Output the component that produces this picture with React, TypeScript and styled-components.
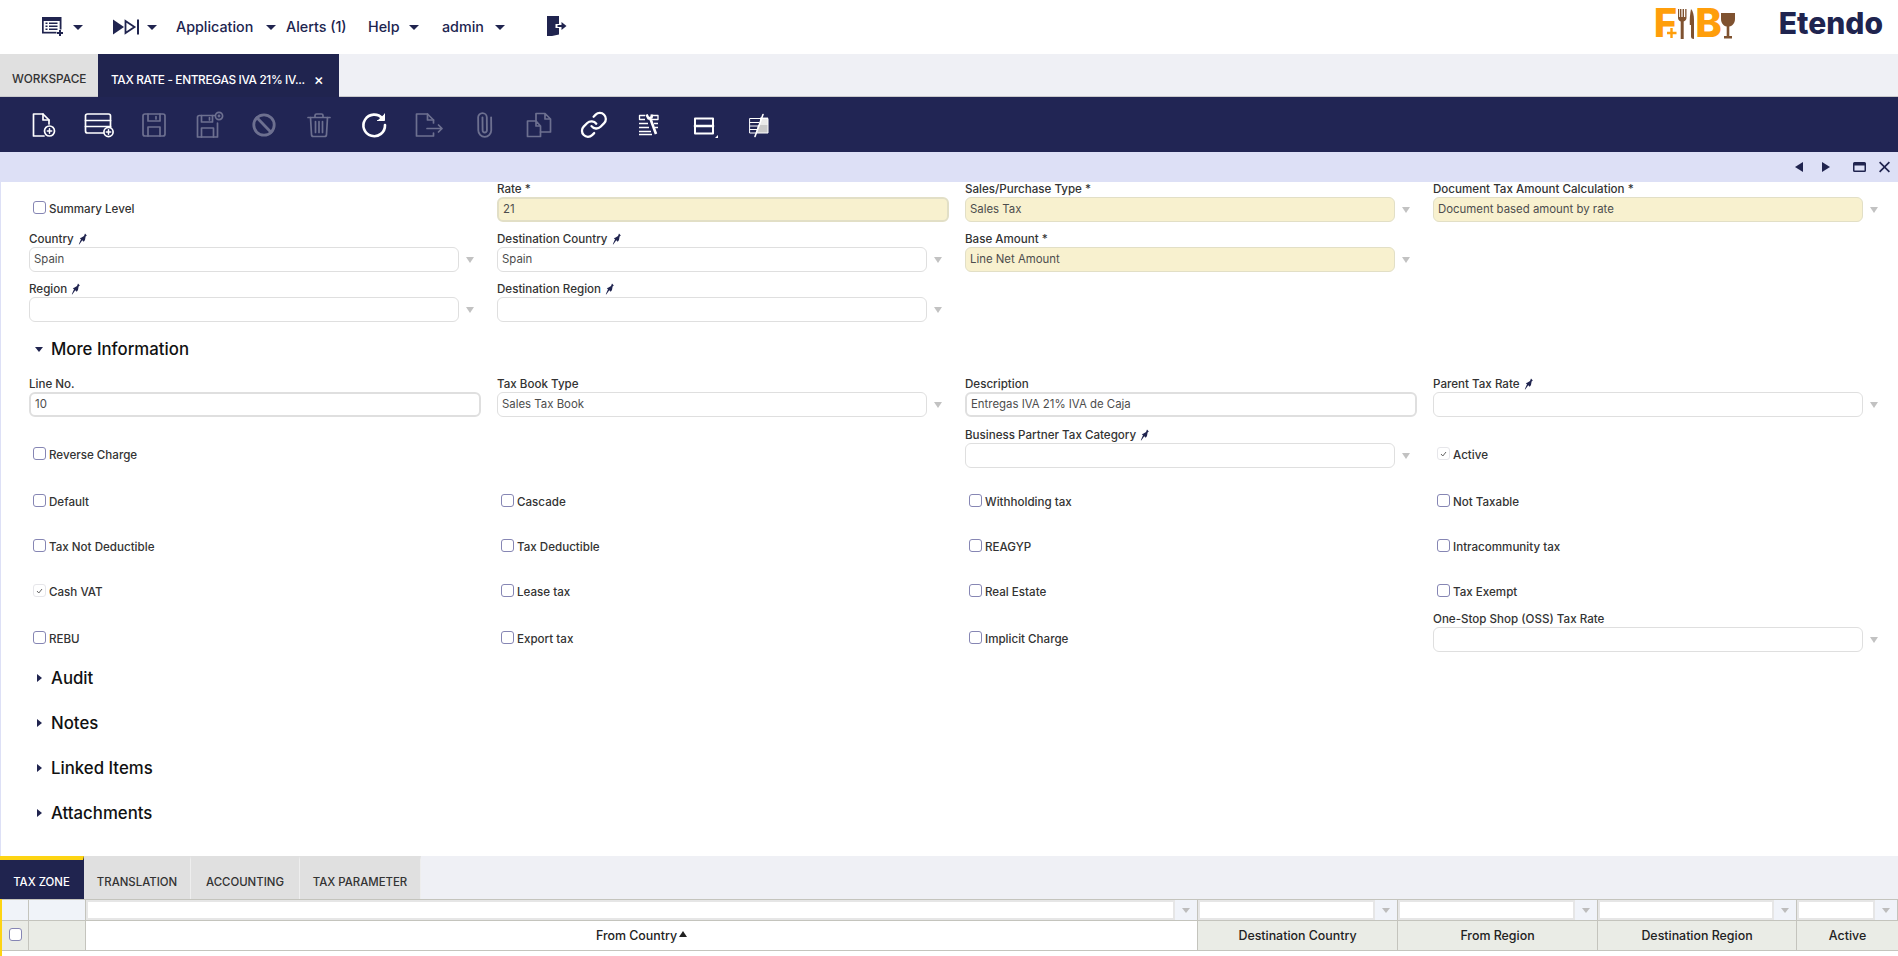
import React from "react";
import styled, { createGlobalStyle } from "styled-components";

const navy = "#20244f";

const GlobalStyle = createGlobalStyle`
  html, body {
    margin: 0;
    padding: 0;
    background: #fff;
    font-family: Inter, "Open Sans", sans-serif;
    overflow: hidden;
  }
  * { box-sizing: border-box; }
`;

const Page = styled.div`
  width: 1898px;
  height: 956px;
  display: flex;
  flex-direction: column;
  overflow: hidden;
`;

/* top bar */
const TopBar = styled.header`
  height: 54px;
  flex: none;
  display: flex;
  align-items: center;
  padding-left: 42px;
  background: #fff;
  color: ${navy};
`;

const NavItem = styled.div<{ $width: number; $gap?: number }>`
  width: ${(p) => p.$width}px;
  flex: none;
  display: flex;
  align-items: center;
  gap: ${(p) => p.$gap ?? 10}px;
  font-size: 14.3px;
  font-weight: 500;
  height: 54px;
`;

const NavText = styled.span`
  margin-top: -2px;
`;

const Caret = styled.span`
  width: 0;
  height: 0;
  border-left: 5px solid transparent;
  border-right: 5px solid transparent;
  border-top: 5px solid ${navy};
  flex: none;
`;

const LogoutIcon = styled.svg`
  margin-top: -2px;
`;

const LogoBox = styled.div`
  margin-left: auto;
  margin-right: 15px;
  display: flex;
  align-items: center;
`;

const FoodLogo = styled.div`
  display: flex;
  align-items: center;
  width: 122px;
  margin-bottom: 8px;
`;

const LogoLetter = styled.span<{ $ml?: number }>`
  flex: none;
  margin-left: ${(p) => p.$ml ?? 0}px;
  color: #ff9e0b;
  font-size: 40px;
  font-weight: 800;
  line-height: 52px;
`;

const LogoSvg = styled.svg<{ $ml?: number; $mt?: number }>`
  flex: none;
  margin-left: ${(p) => p.$ml ?? 0}px;
  margin-top: ${(p) => p.$mt ?? 0}px;
`;

const Brand = styled.div`
  font-size: 30px;
  font-weight: 800;
  color: ${navy};
  line-height: 38px;
  margin-bottom: 9px;
`;

/* window tabs */
const TabBar = styled.div`
  height: 43px;
  flex: none;
  display: flex;
  background: #eff0f5;
  border-bottom: 1px solid #c9c9cc;
`;

const WindowTab = styled.div<{ $active?: boolean }>`
  width: ${(p) => (p.$active ? 241 : 98)}px;
  margin-bottom: ${(p) => (p.$active ? -1 : 0)}px;
  padding: 8px 0 0 ${(p) => (p.$active ? 13 : 12)}px;
  display: flex;
  align-items: center;
  background: ${(p) => (p.$active ? navy : "#e0e0e0")};
  color: ${(p) => (p.$active ? "#fff" : "#333")};
  font-size: 11.8px;
  font-weight: 500;
  letter-spacing: ${(p) => (p.$active ? -0.33 : 0)}px;
  white-space: nowrap;
`;

const TabClose = styled.span`
  margin-left: 9px;
  font-size: 15px;
  color: #fff;
`;

/* toolbar */
const Toolbar = styled.div`
  height: 55px;
  flex: none;
  display: flex;
  padding-left: 16px;
  background: #212554;
`;

const ToolButton = styled.div<{ $off?: boolean }>`
  width: 55px;
  height: 55px;
  flex: none;
  display: flex;
  align-items: center;
  justify-content: center;
  color: ${(p) => (p.$off ? "#6d7090" : "#fff")};
`;

const ToolSvg = styled.svg.attrs({ viewBox: "0 0 32 28", width: 32, height: 28 })<{ $sw?: number }>`
  fill: none;
  stroke: currentColor;
  stroke-width: ${(p) => p.$sw ?? 1.7};
  stroke-linejoin: round;
  stroke-linecap: round;
`;

const StatusBar = styled.div`
  height: 30px;
  flex: none;
  display: flex;
  align-items: center;
  justify-content: flex-end;
  padding-right: 8px;
  background: #dde0f6;
  color: ${navy};
`;

const StatusIcon = styled.svg<{ $w: number; $mr?: number }>`
  width: ${(p) => p.$w}px;
  height: 14px;
  margin-right: ${(p) => p.$mr ?? 0}px;
  flex: none;
  fill: currentColor;
`;

/* form */
const FormArea = styled.main`
  flex: 1;
  min-height: 0;
  border-left: 1px solid #dde0f6;
  padding-left: 28px;
  background: #fff;
  overflow: hidden;
`;

const FormGrid = styled.div<{ $rows: string }>`
  display: grid;
  grid-template-columns: repeat(4, 468px);
  grid-template-rows: ${(p) => p.$rows};
  align-items: end;
`;

const FieldBox = styled.div`
  display: flex;
  flex-direction: column;
`;

const Label = styled.label`
  height: 16px;
  display: flex;
  align-items: center;
  gap: 4px;
  font-size: 11.6px;
  font-weight: 500;
  line-height: 16px;
  color: #333;
  white-space: nowrap;
`;

const InputRow = styled.div`
  display: flex;
  align-items: center;
`;

const TextBox = styled.div<{ $required?: boolean; $thick?: boolean; $wide?: boolean }>`
  width: ${(p) => (p.$wide ? 452 : 430)}px;
  height: 25px;
  padding: 0 4px 1px;
  display: flex;
  align-items: center;
  border: ${(p) => (p.$thick ? 2 : 1)}px solid ${(p) => (p.$required ? "#e2dfc6" : "#dfdfdf")};
  border-radius: 6px;
  background: ${(p) => (p.$required ? "#f8f1cf" : "#fff")};
  font-size: 11.4px;
  color: #4d4d4d;
  white-space: nowrap;
`;

const SelectArrow = styled.span`
  width: 22px;
  flex: none;
  display: flex;
  justify-content: center;
  &::before {
    content: "";
    border-left: 4.5px solid transparent;
    border-right: 4.5px solid transparent;
    border-top: 6px solid #c2c2c2;
  }
`;

const CheckCell = styled.div`
  height: 26px;
  padding-left: 4px;
  display: flex;
  align-items: center;
  gap: 3px;
  font-size: 11.6px;
  font-weight: 500;
  color: #333;
  white-space: nowrap;
`;

const Box = styled.span<{ $checked?: boolean }>`
  width: 13px;
  height: 13px;
  flex: none;
  margin-top: -3px;
  display: flex;
  align-items: center;
  justify-content: center;
  border: 1px solid ${(p) => (p.$checked ? "#e6e6ea" : "#8686b4")};
  border-radius: 3px;
  background: #fff;
`;

const SectionHead = styled.div<{ $h: number; $top?: number }>`
  height: ${(p) => p.$h}px;
  padding-top: ${(p) => p.$top ?? 0}px;
  display: flex;
  align-items: center;
  font-size: 16.8px;
  font-weight: 500;
  color: #111;
`;

const SectionArrow = styled.span<{ $open?: boolean }>`
  width: 22px;
  flex: none;
  display: flex;
  padding-left: ${(p) => (p.$open ? 6 : 8)}px;
  &::before {
    content: "";
    border: 0 solid transparent;
    ${(p) =>
      p.$open
        ? `border-width: 5px 4.5px 0; border-top-color: ${navy};`
        : `border-width: 4.5px 0 4.5px 5px; border-left-color: ${navy};`}
  }
`;

/* sub tabs + grid */
const SubTabs = styled.div`
  height: 43px;
  flex: none;
  display: flex;
  background: #eff0f5;
`;

const SubTab = styled.div<{ $active?: boolean; $width: number }>`
  width: ${(p) => p.$width}px;
  display: flex;
  align-items: center;
  justify-content: center;
  padding-top: 4px;
  background: ${(p) => (p.$active ? navy : "#e0e0e0")};
  border-top: 4px solid ${(p) => (p.$active ? "#fdd413" : "#e0e0e0")};
  border-right: 1px solid ${(p) => (p.$active ? navy : "#eeeeee")};
  color: ${(p) => (p.$active ? "#fff" : "#333")};
  font-size: 11.4px;
  font-weight: 500;
`;

const TableWrap = styled.div`
  flex: none;
  height: 57px;
  border-left: 2px solid #fdd413;
  background: #fff;
`;

const columns = "27px 57px 1112px 200px 200px 199px 101px";

const FilterRow = styled.div`
  height: 22px;
  display: grid;
  grid-template-columns: ${columns};
  border-top: 1px solid #c4c4bd;
  border-bottom: 1px solid #c4c4bd;
`;

const FilterCell = styled.div`
  display: flex;
  background: #f0f3f9;
  border-right: 1px solid #c4c4bd;
`;

const FilterInput = styled.div`
  flex: 1;
  background: #fff;
  border: 2px solid #e6e6e6;
`;

const FilterArrow = styled.span`
  width: 22px;
  flex: none;
  display: flex;
  align-items: center;
  justify-content: center;
  &::before {
    content: "";
    border-left: 4px solid transparent;
    border-right: 4px solid transparent;
    border-top: 5px solid #bdbdbd;
  }
`;

const HeaderRow = styled.div`
  height: 30px;
  display: grid;
  grid-template-columns: ${columns};
  border-bottom: 1px solid #c4c4bd;
`;

const HeaderCell = styled.div<{ $sorted?: boolean }>`
  display: flex;
  align-items: center;
  justify-content: center;
  gap: 2px;
  background: ${(p) => (p.$sorted ? "#fff" : "#eaece6")};
  border-right: 1px solid #c4c4bd;
  font-size: 12.4px;
  font-weight: 500;
  color: #222;
  &:last-child {
    border-right: 0;
  }
`;

const HeaderBox = styled(Box)`
  margin-top: -2px;
`;

const SortMark = styled.span`
  border-left: 4px solid transparent;
  border-right: 4px solid transparent;
  border-bottom: 6px solid #222;
  margin-bottom: 3px;
`;

const Pin = () => (
  <svg width="10" height="12" viewBox="0 0 10 12" fill={navy}>
    <path d="M7 .6 8.800 2.600 7.600 3.400 7 7 5.700 8.800 4.300 7.300 1.200 11.500.8 11.200 3 6.200 1.800 5.200 3.600 4.400 6 3z" />
  </svg>
);

const Tick = () => (
  <svg width="7" height="6" viewBox="0 0 7 6" fill="none" stroke="#666" strokeWidth="1">
    <path d="M1 3l1.800 2L6 1" />
  </svg>
);

type FieldProps = {
  label: string;
  value?: string;
  required?: boolean;
  pin?: boolean;
  text?: boolean;
  thick?: boolean;
};

const Field = ({ label, value, required, pin, text, thick }: FieldProps) => (
  <FieldBox>
    <Label>
      {label}
      {required ? " *" : ""}
      {pin && <Pin />}
    </Label>
    <InputRow>
      <TextBox $required={required} $thick={thick} $wide={text}>
        {value}
      </TextBox>
      {!text && <SelectArrow />}
    </InputRow>
  </FieldBox>
);

const Check = ({ label, checked }: { label: string; checked?: boolean }) => (
  <CheckCell>
    <Box $checked={checked}>{checked && <Tick />}</Box>
    {label}
  </CheckCell>
);

const Section = ({ title, open, h, top }: { title: string; open?: boolean; h: number; top?: number }) => (
  <SectionHead $h={h} $top={top}>
    <SectionArrow $open={open} />
    {title}
  </SectionHead>
);

const Plus = ({ cx, cy, r = 5 }: { cx: number; cy: number; r?: number }) => (
  <>
    <circle cx={cx} cy={cy} r={r} fill="#212554" />
    <path d={`M${cx} ${cy - 2.2}v4.400M${cx - 2.2} ${cy}h4.400`} strokeWidth="1.500" />
  </>
);

const toolIcons: { off?: boolean; icon: React.ReactNode }[] = [
  {
    icon: (
      <ToolSvg>
        <path d="M21 13V9l-6-6H5.500v22H16" />
        <path d="M15 3v6h6" />
        <Plus cx={21.5} cy={20} />
      </ToolSvg>
    ),
  },
  {
    icon: (
      <ToolSvg>
        <rect x="2.500" y="3" width="25" height="19" rx="2" />
        <path d="M2.500 9.500h25M2.500 15.500h25" />
        <Plus cx={25.5} cy={21} r={4.6} />
      </ToolSvg>
    ),
  },
  {
    off: true,
    icon: (
      <ToolSvg>
        <path d="M7 3h18a2 2 0 0 1 2 2v18a2 2 0 0 1-2 2H7a2 2 0 0 1-2-2V5a2 2 0 0 1 2-2z" />
        <path d="M10 3v7h12V3M18 5.500v2.500M10 25v-9h12v9" />
      </ToolSvg>
    ),
  },
  {
    off: true,
    icon: (
      <ToolSvg>
        <path d="M21.500 4.500H6.500a2 2 0 0 0-2 2V26h20V12" />
        <path d="M8.500 4.500V11h11V4.500M16.500 6.500V9M8.500 26v-9h12v9" />
        <circle cx="26" cy="5" r="3.600" />
        <circle cx="26" cy="5" r=".6" />
      </ToolSvg>
    ),
  },
  {
    off: true,
    icon: (
      <ToolSvg $sw={2.8}>
        <circle cx="16" cy="14" r="10.200" />
        <path d="M9 6.800l14 14.400" />
      </ToolSvg>
    ),
  },
  {
    off: true,
    icon: (
      <ToolSvg>
        <path d="M5 6.500h22M12 6.500V4.500a1.500 1.500 0 0 1 1.500-1.500h5a1.500 1.500 0 0 1 1.500 1.500v2" />
        <path d="M7.500 6.500l1 17a2 2 0 0 0 2 2h11a2 2 0 0 0 2-2l1-17" />
        <path d="M12.500 10.500v11M16 10.500v11M19.500 10.500v11" />
      </ToolSvg>
    ),
  },
  {
    icon: (
      <ToolSvg $sw={2.6}>
        <path d="M24.500 7.500A10.800 10.800 0 1 0 27 14" />
        <path d="M26.500 3v6.500h-7" fill="#fff" strokeWidth="1" />
      </ToolSvg>
    ),
  },
  {
    off: true,
    icon: (
      <ToolSvg>
        <path d="M20.500 12V9l-6-6H3.500v22h17v-3" />
        <path d="M14.500 3v6h6M14 17.500h15M25.500 14l3.500 3.500-3.500 3.500" />
      </ToolSvg>
    ),
  },
  {
    off: true,
    icon: (
      <ToolSvg>
        <g transform="translate(16 14) rotate(-45) scale(1.080) translate(-12 -12)">
          <path d="m16 6-8.414 8.586a2 2 0 0 0 2.829 2.829l8.414-8.586a4 4 0 1 0-5.657-5.657l-8.379 8.551a6 6 0 1 0 8.485 8.485l8.379-8.551" />
        </g>
      </ToolSvg>
    ),
  },
  {
    off: true,
    icon: (
      <ToolSvg>
        <path d="M13 10H4.500v15.500h13V15l-4.500-5v5h4.500" />
        <path d="M13 10V2.500h9l5.500 5.500v13H17.500M22 2.500V8h5.500" />
      </ToolSvg>
    ),
  },
  {
    icon: (
      <ToolSvg $sw={1.9}>
        <g transform="translate(1.500 -.5) scale(1.200)">
          <path d="M10 13a5 5 0 0 0 7.540.54l3-3a5 5 0 0 0-7.070-7.070l-1.720 1.710" />
          <path d="M14 11a5 5 0 0 0-7.540-.54l-3 3a5 5 0 0 0 7.070 7.070l1.710-1.710" />
        </g>
      </ToolSvg>
    ),
  },
  {
    icon: (
      <ToolSvg $sw={1.3}>
        <g strokeLinecap="butt">
          <path d="M12 4.500H6.500v4H12M19 4.500h6v4h-6M6 12.500h9M21 12.500h4M6 16.500h10M22 16.500h3M6 20.500h12M6 23.500h13" />
          <path d="M13.500 3.500l2 4 3-1 .5-3M17.500 8l5.500 15" strokeWidth="2.600" />
        </g>
      </ToolSvg>
    ),
  },
  {
    icon: (
      <ToolSvg $sw={2}>
        <rect x="7" y="7.500" width="18" height="15" />
        <path d="M7 15h18" strokeWidth="2.600" />
        <path d="M30 24v3h-3z" fill="#fff" stroke="none" />
      </ToolSvg>
    ),
  },
  {
    icon: (
      <ToolSvg $sw={1}>
        <path d="M17 6.500h8v7.500h-8z" fill="#e9e9e9" stroke="none" />
        <path d="M15 14h10v8H13z" fill="#c9c9c9" stroke="none" />
        <path d="M7 7.500h18v14.500H7zM7 11.500h9M7 15h8M7 18.500h7" />
        <path d="M12 25.500L20 3.500" strokeWidth="1.600" />
      </ToolSvg>
    ),
  },
];

export default function App() {
  return (
    <Page>
      <GlobalStyle />
      <TopBar>
        <NavItem $width={71} $gap={9}>
          <svg width="22" height="20" viewBox="0 0 22 20">
            <rect x="0" y="0" width="19.500" height="16.500" fill={navy} />
            <rect x="1.700" y="4" width="16" height="10.800" fill="#fff" />
            <path d="M3.500 6.300h2M3.500 9.300h2M3.500 12.300h2M7 6.300h8.500M7 9.300h8.500M7 12.300h8.500" stroke={navy} strokeWidth="1.500" />
            <path d="M18 12.500v7M14.500 16h7" stroke="#fff" strokeWidth="4" />
            <path d="M18 13v6M15 16h6" stroke={navy} strokeWidth="2" />
          </svg>
          <Caret />
        </NavItem>
        <NavItem $width={63} $gap={8}>
          <svg width="26" height="16" viewBox="0 0 26 16">
            <path d="M0 .5 11 8 0 15.500z" fill={navy} />
            <path d="M12.500 2 21.500 8 12.500 14z" fill="none" stroke={navy} strokeWidth="1.800" />
            <rect x="24" y="0.500" width="2" height="15" fill={navy} />
          </svg>
          <Caret />
        </NavItem>
        <NavItem $width={110} $gap={13}>
          <NavText>Application</NavText>
          <Caret />
        </NavItem>
        <NavItem $width={82}>
          <NavText>Alerts (1)</NavText>
        </NavItem>
        <NavItem $width={74}>
          <NavText>Help</NavText>
          <Caret />
        </NavItem>
        <NavItem $width={105} $gap={11}>
          <NavText>admin</NavText>
          <Caret />
        </NavItem>
        <NavItem $width={30}>
          <LogoutIcon width="20" height="20" viewBox="0 0 20 20" fill={navy}>
            <path d="M0 0h12v8H8.500v4H12v6.500L5 20H0z" />
            <path d="M9.500 9h5V6l5 4-5 4v-3h-5z" />
            <path d="M9 9h1.500v2H9z" fill="#fff" />
          </LogoutIcon>
        </NavItem>
        <LogoBox>
          <FoodLogo>
            <LogoLetter $ml={-3}>F</LogoLetter>
            <LogoSvg $ml={-11} $mt={1} width="29" height="30" viewBox="0 0 29 30">
              <path d="M5.500 19v10M1 24h9.500" stroke="#ff9e0b" strokeWidth="2.400" />
              <path d="M12 0v9c0 2 1.500 3 2.700 3.500V30h3V12.500C19 12 20.500 11 20.500 9V0h-1.300v8h-1.200V0h-1.400v8h-1.200V0h-1.400v8H13.200V0z" fill="#7f5230" />
              <path d="M25 0c2 2 3 6 3 11v19c-1.800 0-3-.8-3-2.500V16h-1.200c-.3-6 .2-11 1.200-16z" fill="#7f5230" />
            </LogoSvg>
            <LogoLetter>B</LogoLetter>
            <LogoSvg $ml={-1} $mt={5} width="14" height="26" viewBox="0 0 14 26">
              <path d="M0 0h14v6c0 4-2.500 7-5.700 7.600V23H11v2.500H3V23h2.700v-9.400C2.500 13 0 10 0 6z" fill="#7f5230" />
            </LogoSvg>
          </FoodLogo>
          <Brand>Etendo</Brand>
        </LogoBox>
      </TopBar>

      <TabBar>
        <WindowTab>WORKSPACE</WindowTab>
        <WindowTab $active>
          TAX RATE - ENTREGAS IVA 21% IV...
          <TabClose>×</TabClose>
        </WindowTab>
      </TabBar>

      <Toolbar>
        {toolIcons.map((t, i) => (
          <ToolButton key={i} $off={t.off}>
            {t.icon}
          </ToolButton>
        ))}
      </Toolbar>

      <StatusBar>
        <StatusIcon $w={9} $mr={19} viewBox="0 0 9 14">
          <path d="M9 2v10L1 7z" />
        </StatusIcon>
        <StatusIcon $w={9} $mr={22} viewBox="0 0 9 14">
          <path d="M0 2v10l8-5z" />
        </StatusIcon>
        <StatusIcon $w={13} $mr={13} viewBox="0 0 13 14">
          <path d="M1.500 2h10A1.500 1.500 0 0 1 13 3.500v7a1.500 1.500 0 0 1-1.500 1.500h-10A1.500 1.500 0 0 1 0 10.500v-7A1.500 1.500 0 0 1 1.500 2zM1.500 5.500v5h10v-5z" />
        </StatusIcon>
        <StatusIcon $w={11} viewBox="0 0 11 14">
          <path d="M1.200 1.500 5.500 5.800 9.800 1.500 11 2.700 6.700 7 11 11.300 9.800 12.500 5.500 8.200 1.200 12.500 0 11.300 4.300 7 0 2.700z" />
        </StatusIcon>
      </StatusBar>

      <FormArea>
        <FormGrid $rows="40px 50px 50px">
          <Check label="Summary Level" />
          <Field label="Rate" value="21" required text thick />
          <Field label="Sales/Purchase Type" value="Sales Tax" required />
          <Field label="Document Tax Amount Calculation" value="Document based amount by rate" required />
          <Field label="Country" value="Spain" pin />
          <Field label="Destination Country" value="Spain" pin />
          <Field label="Base Amount" value="Line Net Amount" required />
          <span />
          <Field label="Region" pin />
          <Field label="Destination Region" pin />
        </FormGrid>
        <Section title="More Information" open h={54} />
        <FormGrid $rows="41px 51px 47px 45px 45px 47px">
          <Field label="Line No." value="10" text thick />
          <Field label="Tax Book Type" value="Sales Tax Book" />
          <Field label="Description" value="Entregas IVA 21% IVA de Caja" text thick />
          <Field label="Parent Tax Rate" pin />
          <Check label="Reverse Charge" />
          <span />
          <Field label="Business Partner Tax Category" pin />
          <Check label="Active" checked />
          <Check label="Default" />
          <Check label="Cascade" />
          <Check label="Withholding tax" />
          <Check label="Not Taxable" />
          <Check label="Tax Not Deductible" />
          <Check label="Tax Deductible" />
          <Check label="REAGYP" />
          <Check label="Intracommunity tax" />
          <Check label="Cash VAT" checked />
          <Check label="Lease tax" />
          <Check label="Real Estate" />
          <Check label="Tax Exempt" />
          <Check label="REBU" />
          <Check label="Export tax" />
          <Check label="Implicit Charge" />
          <Field label="One-Stop Shop (OSS) Tax Rate" />
        </FormGrid>
        <Section title="Audit" h={48} top={4} />
        <Section title="Notes" h={45} />
        <Section title="Linked Items" h={45} />
        <Section title="Attachments" h={45} />
      </FormArea>

      <SubTabs>
        <SubTab $active $width={84}>TAX ZONE</SubTab>
        <SubTab $width={107}>TRANSLATION</SubTab>
        <SubTab $width={109}>ACCOUNTING</SubTab>
        <SubTab $width={121}>TAX PARAMETER</SubTab>
      </SubTabs>

      <TableWrap>
        <FilterRow>
          <FilterCell />
          <FilterCell />
          {[0, 1, 2, 3, 4].map((i) => (
            <FilterCell key={i}>
              <FilterInput />
              <FilterArrow />
            </FilterCell>
          ))}
        </FilterRow>
        <HeaderRow>
          <HeaderCell>
            <HeaderBox />
          </HeaderCell>
          <HeaderCell />
          <HeaderCell $sorted>
            From Country
            <SortMark />
          </HeaderCell>
          <HeaderCell>Destination Country</HeaderCell>
          <HeaderCell>From Region</HeaderCell>
          <HeaderCell>Destination Region</HeaderCell>
          <HeaderCell>Active</HeaderCell>
        </HeaderRow>
      </TableWrap>
    </Page>
  );
}
